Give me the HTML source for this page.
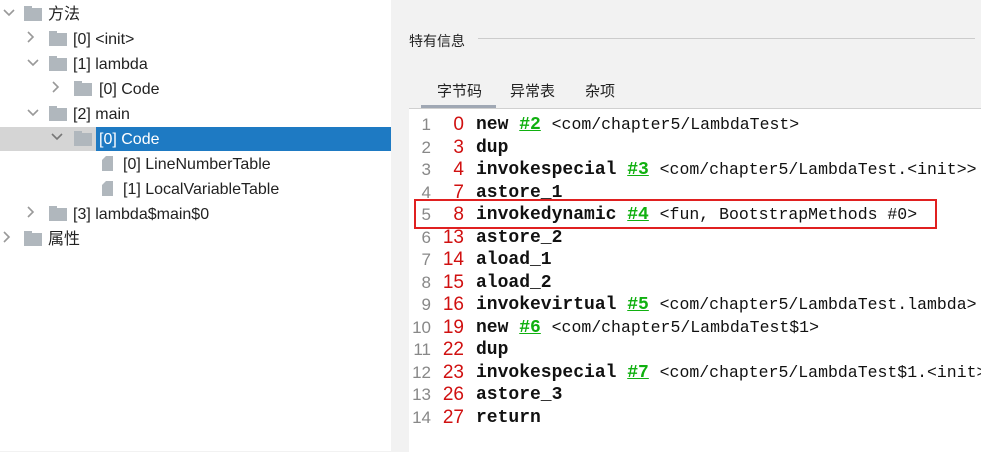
<!DOCTYPE html>
<html><head><meta charset="utf-8"><style>
body{margin:0;width:981px;height:451px;overflow:hidden;background:#f2f2f2;font-family:"Liberation Sans","Noto Sans CJK SC",sans-serif;position:relative}
.left{position:absolute;left:0;top:0;width:391px;height:451px;background:#fff}
.row{position:absolute;height:25px;line-height:25px;font-size:16px;color:#222;white-space:nowrap}
.sel{position:absolute;left:0;top:127px;width:391px;height:24px;background:#d5d5d5}
.selb{position:absolute;left:96px;top:127px;width:295px;height:24px;background:#1e7ac3}
.fold{position:absolute;width:18px;height:13px;background:#b0b7bd}
.fold:before{content:"";position:absolute;left:0;top:-2px;width:8px;height:3px;background:#b0b7bd}
.file{position:absolute;width:11px;height:15px;background:#b0b7bd;clip-path:polygon(4px 0,100% 0,100% 100%,0 100%,0 4px)}
.hdr{position:absolute;left:409px;top:31px;font-size:14px;color:#222}
.hl{position:absolute;left:478px;top:38px;width:497px;height:1px;background:#ccc}
.tab{position:absolute;top:80px;font-size:15px;color:#222}
.code{position:absolute;left:409px;top:108px;width:572px;height:343px;background:#fff;border-top:1px solid #d0d0d0;overflow:hidden}
.ln{position:absolute;left:0;width:22px;text-align:right;color:#888;font-family:"Liberation Sans",sans-serif;font-size:17px;line-height:21px}
.of{position:absolute;left:22px;width:33px;text-align:right;color:#d01010;font-family:"Liberation Sans",sans-serif;font-size:19px}
.op{position:absolute;left:67px;font-family:"Liberation Mono",monospace;font-size:18px;font-weight:bold;color:#111;white-space:nowrap}
.op a{color:#10b010;text-decoration:underline}
.op span{font-weight:normal;font-size:16.5px}
.r{position:relative;height:22.5px;line-height:22px}
</style></head><body>
<div class="left">
<div class="sel"></div><div class="selb"></div>
<svg width="391" height="451" style="position:absolute;left:0;top:0" fill="none" stroke="#999" stroke-width="1.6">
<path d="M4 10l5 5 5-5"/><path d="M28 32l5 5-5 5"/><path d="M28 60l5 5 5-5"/><path d="M53 82l5 5-5 5"/><path d="M28 110l5 5 5-5"/><path d="M52 134l5 5 5-5" stroke="#777"/><path d="M28 207l5 5-5 5"/><path d="M4 232l5 5-5 5"/>
</svg>
<div class="fold" style="left:24px;top:8px"></div>
<div class="fold" style="left:49px;top:33px"></div>
<div class="fold" style="left:49px;top:58px"></div>
<div class="fold" style="left:74px;top:83px"></div>
<div class="fold" style="left:49px;top:108px"></div>
<div class="fold" style="left:74px;top:133px"></div>
<div class="file" style="left:102px;top:156px"></div>
<div class="file" style="left:102px;top:181px"></div>
<div class="fold" style="left:49px;top:208px"></div>
<div class="fold" style="left:24px;top:233px"></div>
<div class="row" style="left:48px;top:2px">方法</div>
<div class="row" style="left:73px;top:27px">[0] &lt;init&gt;</div>
<div class="row" style="left:73px;top:52px">[1] lambda</div>
<div class="row" style="left:99px;top:77px">[0] Code</div>
<div class="row" style="left:73px;top:102px">[2] main</div>
<div class="row" style="left:99px;top:127px;color:#fff">[0] Code</div>
<div class="row" style="left:123px;top:152px">[0] LineNumberTable</div>
<div class="row" style="left:123px;top:177px">[1] LocalVariableTable</div>
<div class="row" style="left:73px;top:202px">[3] lambda$main$0</div>
<div class="row" style="left:48px;top:227px">属性</div>
</div>
<div class="hdr">特有信息</div><div class="hl"></div>
<div class="tab" style="left:437px">字节码</div>
<div class="tab" style="left:510px">异常表</div>
<div class="tab" style="left:585px">杂项</div>
<div style="position:absolute;left:421px;top:105px;width:75px;height:3px;background:#a0a8b4"></div>
<div class="code">
<div style="position:absolute;left:5px;top:90px;width:519px;height:26px;border:2px solid #e02020"></div>
<div style="position:absolute;top:5px;left:0;width:572px">
<div class="r"><span class="ln">1</span><span class="of">0</span><span class="op">new <a>#2</a> <span>&lt;com/chapter5/LambdaTest&gt;</span></span></div>
<div class="r"><span class="ln">2</span><span class="of">3</span><span class="op">dup</span></div>
<div class="r"><span class="ln">3</span><span class="of">4</span><span class="op">invokespecial <a>#3</a> <span>&lt;com/chapter5/LambdaTest.&lt;init&gt;&gt;</span></span></div>
<div class="r"><span class="ln">4</span><span class="of">7</span><span class="op">astore_1</span></div>
<div class="r"><span class="ln">5</span><span class="of">8</span><span class="op">invokedynamic <a>#4</a> <span>&lt;fun, BootstrapMethods #0&gt;</span></span></div>
<div class="r"><span class="ln">6</span><span class="of">13</span><span class="op">astore_2</span></div>
<div class="r"><span class="ln">7</span><span class="of">14</span><span class="op">aload_1</span></div>
<div class="r"><span class="ln">8</span><span class="of">15</span><span class="op">aload_2</span></div>
<div class="r"><span class="ln">9</span><span class="of">16</span><span class="op">invokevirtual <a>#5</a> <span>&lt;com/chapter5/LambdaTest.lambda&gt;</span></span></div>
<div class="r"><span class="ln">10</span><span class="of">19</span><span class="op">new <a>#6</a> <span>&lt;com/chapter5/LambdaTest$1&gt;</span></span></div>
<div class="r"><span class="ln">11</span><span class="of">22</span><span class="op">dup</span></div>
<div class="r"><span class="ln">12</span><span class="of">23</span><span class="op">invokespecial <a>#7</a> <span>&lt;com/chapter5/LambdaTest$1.&lt;init&gt;&gt;</span></span></div>
<div class="r"><span class="ln">13</span><span class="of">26</span><span class="op">astore_3</span></div>
<div class="r"><span class="ln">14</span><span class="of">27</span><span class="op">return</span></div>
</div>
</div>
</body></html>
